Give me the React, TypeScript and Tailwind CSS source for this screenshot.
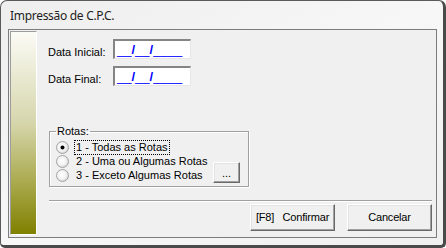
function Radio({ checked }: { checked?: boolean }) {
  return (
    <svg width="13" height="13" viewBox="0 0 13 13" className="shrink-0">
      <defs>
        <radialGradient id="rg" cx="45%" cy="45%" r="60%">
          <stop offset="0%" stopColor="#ffffff" />
          <stop offset="60%" stopColor="#f2f2f2" />
          <stop offset="100%" stopColor="#c8c8c8" />
        </radialGradient>
      </defs>
      <circle cx="6.5" cy="6.5" r="6" fill="url(#rg)" stroke="#a6a6a6" />
      {checked && <circle cx="6.5" cy="6.5" r="2" fill="#000" />}
    </svg>
  )
}

function DateBox() {
  return (
    <div className="w-[78px] h-[20px] bg-white border-t-2 border-l-2 border-t-[#858585] border-l-[#858585] border-b border-r border-b-[#e6e6e6] border-r-[#e6e6e6] pl-[2px] flex items-center">
      <span className="text-[13px] leading-[17px] text-[#0000ff] whitespace-pre">
        __<b>/</b>__<b>/</b>____
      </span>
    </div>
  )
}

function Btn({ children, className = '' }: { children: React.ReactNode; className?: string }) {
  return (
    <div
      className={`flex items-center justify-center bg-[#f0f0f0] border border-t-white border-l-white border-r-[#696969] border-b-[#696969] shadow-[inset_-1px_-1px_0_#a0a0a0,inset_1px_1px_0_#e3e3e3] whitespace-pre ${className}`}
    >
      {children}
    </div>
  )
}

export default function App() {
  const rows = [
    { label: '1 - Todas as Rotas', checked: true },
    { label: '2 - Uma ou Algumas Rotas' },
    { label: '3 - Exceto Algumas Rotas' },
  ]

  return (
    <div className="w-[446px] h-[248px] flex flex-col rounded-t-[7px] rounded-b-[5px] border-t border-l border-[#5a5a5a] border-r-[3px] border-b-[3px] border-r-[#4a4a4a] border-b-[#4a4a4a] bg-gradient-to-br from-[#eeeeee] via-[#f7f7f7] to-[#f0f0f0] font-['Liberation_Sans',Arial,sans-serif] text-[11px] text-black overflow-hidden">
      {/* title bar */}
      <div className="h-[28px] shrink-0 flex items-center pl-[9px] pt-[2px]">
        <span className="font-['Noto_Sans',sans-serif] text-[12px] tracking-[-0.3px] text-[#1e1e1e]">Impressão de C.P.C.</span>
      </div>

      {/* client area */}
      <div className="flex-1 ml-[7px] mr-[6px] mb-[7px] border border-[#7c7c7c] bg-[#f0f0f0] flex">
        <div className="w-[27px] mt-[1px] mb-[2px] ml-[1px] border-t border-l border-t-[#9c9c9c] border-l-[#9c9c9c] border-r border-b border-r-white border-b-white bg-[linear-gradient(to_bottom,#fbfbf6_0%,#d6d6ac_45%,#a9a94c_75%,#808000_100%)]" />

        <div className="flex-1 flex flex-col pl-[11px] pr-[4px] pt-[9px]">
          <div className="flex items-end h-[20px]">
            <span className="w-[65px] leading-[13px]">Data Inicial:</span>
            <DateBox />
          </div>
          <div className="flex items-end h-[20px] mt-[7px]">
            <span className="w-[65px] leading-[13px]">Data Final:</span>
            <DateBox />
          </div>

          <fieldset className="ml-[1px] mt-[39px] w-[200px] border border-[#a0a0a0] shadow-[1px_1px_0_#fff,inset_1px_1px_0_#fff]">
            <legend className="ml-[6px] px-[1px] leading-[13px]">Rotas:</legend>
            <div className="flex items-end pt-[2px]">
              <div className="flex flex-col pl-[6px] pb-[4px]">
                {rows.map((r) => (
                  <div key={r.label} className="h-[14px] flex items-center">
                    <Radio checked={r.checked} />
                    <span
                      className={`ml-[5px] h-[15px] px-[1px] leading-[13px] border border-dotted whitespace-nowrap ${
                        r.checked ? 'border-black' : 'border-transparent'
                      }`}
                    >
                      {r.label}
                    </span>
                  </div>
                ))}
              </div>
              <Btn className="ml-auto mr-[8px] mb-[3px] w-[27px] h-[21px] items-end pb-[4px] leading-[10px]">...</Btn>
            </div>
          </fieldset>

          <div className="ml-[1px] mt-[13px] h-[2px] border-t border-[#a0a0a0] border-b border-b-white" />

          <div className="flex justify-end gap-[12px] mt-[2px]">
            <Btn className="w-[85px] h-[27px] tracking-[-0.2px]">{'[F8]   Confirmar'}</Btn>
            <Btn className="w-[85px] h-[27px] tracking-[-0.2px]">Cancelar</Btn>
          </div>
        </div>
      </div>
    </div>
  )
}
